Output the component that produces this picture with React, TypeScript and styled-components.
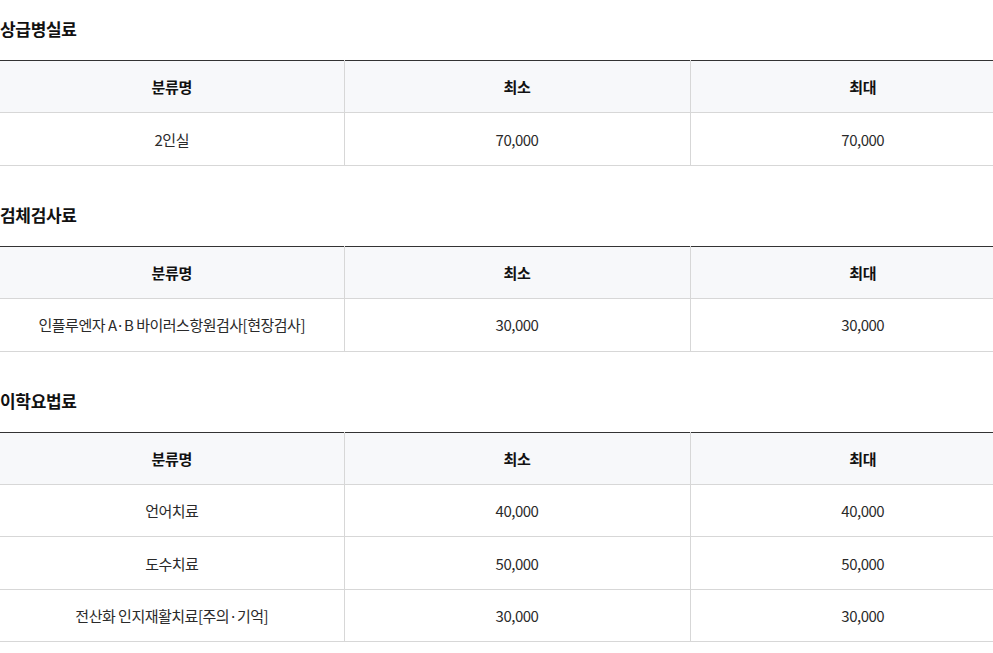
import React from "react";
import styled, { createGlobalStyle } from "styled-components";

const Global = createGlobalStyle`
  html, body { margin: 0; padding: 0; overflow: hidden; background: #fff; }
  body { font-family: "Noto Sans CJK KR", "Noto Sans", sans-serif; color: #333; }
`;

const Page = styled.div`
  width: 1035px;
  padding-top: 16px;
  display: flex;
  flex-direction: column;
  gap: 36px;
`;

const Section = styled.section`
  display: flex;
  flex-direction: column;
`;

const Title = styled.h3`
  margin: 0 0 18px;
  font-size: 17px;
  line-height: 26px;
  font-weight: 700;
  color: #111;
  letter-spacing: -0.3px;
`;

const Table = styled.table`
  width: 1035px;
  table-layout: fixed;
  border-collapse: collapse;
  border-top: 1px solid #333;
`;

const Th = styled.th`
  height: 51.4px;
  padding: 0;
  background: #f7f8fa;
  font-size: 15px;
  font-weight: 700;
  color: #111;
  text-align: center;
  border-bottom: 1px solid #d7d7d7;
  border-left: 1px solid #d7d7d7;
  letter-spacing: -0.3px;
  &:first-child { border-left: none; }
`;

const Td = styled.td`
  height: 51.4px;
  padding: 0;
  font-size: 15px;
  font-weight: 400;
  color: #2a2a2a;
  text-align: center;
  border-bottom: 1px solid #d7d7d7;
  border-left: 1px solid #d7d7d7;
  letter-spacing: -0.5px;
  &:first-child { border-left: none; }
`;

type Row = [string, string, string];

const data: { title: string; rows: Row[] }[] = [
  { title: "상급병실료", rows: [["2인실", "70,000", "70,000"]] },
  {
    title: "검체검사료",
    rows: [["인플루엔자 A·B 바이러스항원검사[현장검사]", "30,000", "30,000"]],
  },
  {
    title: "이학요법료",
    rows: [
      ["언어치료", "40,000", "40,000"],
      ["도수치료", "50,000", "50,000"],
      ["전산화 인지재활치료[주의·기억]", "30,000", "30,000"],
    ],
  },
];

export default function App() {
  return (
    <>
      <Global />
      <Page>
        {data.map((s) => (
          <Section key={s.title}>
            <Title>{s.title}</Title>
            <Table>
              <colgroup>
                <col style={{ width: 344 }} />
                <col style={{ width: 346 }} />
                <col style={{ width: 345 }} />
              </colgroup>
              <thead>
                <tr>
                  <Th>분류명</Th>
                  <Th>최소</Th>
                  <Th>최대</Th>
                </tr>
              </thead>
              <tbody>
                {s.rows.map((r) => (
                  <tr key={r[0]}>
                    <Td>{r[0]}</Td>
                    <Td>{r[1]}</Td>
                    <Td>{r[2]}</Td>
                  </tr>
                ))}
              </tbody>
            </Table>
          </Section>
        ))}
      </Page>
    </>
  );
}
